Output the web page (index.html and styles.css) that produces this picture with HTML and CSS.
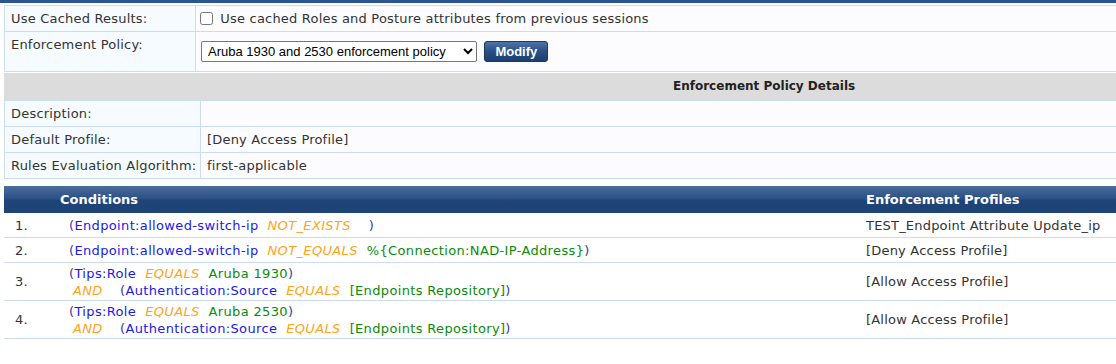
FILE: index.html
```html
<!DOCTYPE html>
<html lang="en">
    <head>
        <meta charset="utf-8">
        <title>Enforcement</title>
        <link rel="stylesheet" href="styles.css">
    </head>

    <body>
        <div class="topbar"></div>

        <table class="form-table">
            <tr>
                <td class="label">Use Cached Results:</td>
                <td class="value"><label class="check"><input type="checkbox"> Use cached Roles and Posture attributes from previous sessions</label></td>
            </tr>
            <tr class="tall">
                <td class="label top">Enforcement Policy:</td>
                <td class="value">
                    <select class="policy-select">
                        <option>Aruba 1930 and 2530 enforcement policy</option>
                    </select>
                    <button class="btn-modify">Modify</button>
                </td>
            </tr>
        </table>

        <div class="section-title">Enforcement Policy Details</div>

        <table class="form-table details">
            <tr>
                <td class="label">Description:</td>
                <td class="value"></td>
            </tr>
            <tr>
                <td class="label">Default Profile:</td>
                <td class="value">[Deny Access Profile]</td>
            </tr>
            <tr>
                <td class="label">Rules Evaluation Algorithm:</td>
                <td class="value">first-applicable</td>
            </tr>
        </table>

        <table class="rules">
            <thead>
                <tr>
                    <th class="col-num"></th>
                    <th class="col-cond">Conditions</th>
                    <th class="col-prof">Enforcement Profiles</th>
                </tr>
            </thead>
            <tbody>
                <tr>
                    <td class="col-num">1.</td>
                    <td class="col-cond"><span class="par">(</span><span class="attr">Endpoint:allowed-switch-ip</span>&nbsp; <span class="op">NOT_EXISTS</span>&nbsp;&nbsp;&nbsp; <span class="par">)</span></td>
                    <td class="col-prof">TEST_Endpoint Attribute Update_ip</td>
                </tr>
                <tr>
                    <td class="col-num">2.</td>
                    <td class="col-cond"><span class="par">(</span><span class="attr">Endpoint:allowed-switch-ip</span>&nbsp; <span class="op">NOT_EQUALS</span>&nbsp; <span class="val">%{Connection:NAD-IP-Address}</span><span class="par">)</span></td>
                    <td class="col-prof">[Deny Access Profile]</td>
                </tr>
                <tr class="multi">
                    <td class="col-num">3.</td>
                    <td class="col-cond"><span class="par">(</span><span class="attr">Tips:Role</span>&nbsp; <span class="op">EQUALS</span>&nbsp; <span class="val">Aruba 1930</span><span class="par">)</span><br><span class="and"><span class="op">AND</span></span><span class="par">(</span><span class="attr">Authentication:Source</span>&nbsp; <span class="op">EQUALS</span>&nbsp; <span class="val">[Endpoints Repository]</span><span class="par">)</span></td>
                    <td class="col-prof">[Allow Access Profile]</td>
                </tr>
                <tr class="multi">
                    <td class="col-num">4.</td>
                    <td class="col-cond"><span class="par">(</span><span class="attr">Tips:Role</span>&nbsp; <span class="op">EQUALS</span>&nbsp; <span class="val">Aruba 2530</span><span class="par">)</span><br><span class="and"><span class="op">AND</span></span><span class="par">(</span><span class="attr">Authentication:Source</span>&nbsp; <span class="op">EQUALS</span>&nbsp; <span class="val">[Endpoints Repository]</span><span class="par">)</span></td>
                    <td class="col-prof">[Allow Access Profile]</td>
                </tr>
            </tbody>
        </table>
    </body>
</html>
```

FILE: styles.css
```css
html, body {
    margin: 0;
    padding: 0;
    background: #fff;
}
body {
    font-family: "DejaVu Sans", Verdana, sans-serif;
    font-size: 13px;
    letter-spacing: 0.2px;
    color: #333;
}
.topbar {
    height: 3px;
    background: #2b5592;
    margin-bottom: 2px;
}

.form-table {
    border-collapse: collapse;
    margin-left: 4px;
    width: 1120px;
}
.form-table td {
    border: 1px solid #cddcf5;
    padding: 0 6px;
    height: 25px;
}
.form-table .label {
    width: 178px;
    background: #f5fbff;
    white-space: nowrap;
}
.form-table .value {
    background: #fcfcff;
}
.form-table .tall td {
    height: 34px;
}
.form-table .top {
    vertical-align: top;
    padding-top: 5px;
}
.check input {
    margin: 0 3px 0 -2px;
    width: 13px;
    height: 13px;
    vertical-align: -2px;
}
.policy-select {
    font-family: "Liberation Sans", Arial, sans-serif;
    font-size: 13px;
    letter-spacing: 0;
    height: 21px;
    width: 276px;
    margin: 0 0 0 -1px;
    padding: 0 0 0 2px;
    border: 1px solid #767676;
    border-radius: 2px;
    background: #fff;
    color: #000;
    vertical-align: middle;
}
.btn-modify {
    font-family: "Liberation Sans", Arial, sans-serif;
    font-size: 13px;
    letter-spacing: 0;
    font-weight: bold;
    color: #fff;
    height: 21px;
    width: 64px;
    margin: 0 0 0 3px;
    padding: 0;
    border: 1px solid #1a3a66;
    border-radius: 3px;
    background: linear-gradient(#4f73a6, #2a4f86 50%, #1d3f72);
    vertical-align: middle;
}

.section-title {
    margin: 1px 0 0 4px;
    height: 27px;
    line-height: 27px;
    background: #dcdcdc;
    font-size: 12px;
    letter-spacing: 0;
    font-weight: bold;
    padding-left: 669px;
    color: #222;
}

.details td {
    height: 25px;
}
.details .label {
    width: 189px;
    padding-right: 0;
}

.rules {
    border-collapse: collapse;
    margin: 7px 0 0 4px;
    width: 1120px;
}
.rules th {
    height: 27px;
    padding: 0;
    text-align: left;
    color: #fff;
    font-weight: bold;
    letter-spacing: 0;
    background: linear-gradient(#4c6d9c, #2c5186 45%, #1e4477 55%, #1e4477);
}
.rules td {
    height: 24px;
    padding: 0;
    border-bottom: 1px solid #cddcf5;
}
.rules .multi td {
    height: 37px;
    line-height: 17px;
}
.rules .col-num {
    padding-left: 11px;
    width: 45px;
}
.rules td.col-cond {
    padding-left: 9px;
    letter-spacing: 0.35px;
}
.rules .col-prof {
    width: 258px;
    padding-left: 6px;
}
.par { color: #3a3a9a; }
.attr { color: #1a1ae6; }
.op { color: #ffa31a; font-style: italic; }
.val { color: #0a8a0a; }
.and {
    display: inline-block;
    width: 47px;
    padding-left: 4px;
}
```
